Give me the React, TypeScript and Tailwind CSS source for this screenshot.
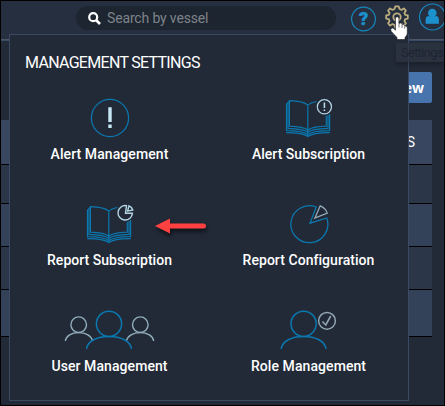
import type { ReactNode } from "react";

const BLUE = "#0b78b0";
const PALE = "#b4d6e6";

function Art({ children }: { children: ReactNode }) {
  return (
    <svg width="100" height="42" viewBox="0 0 100 42" fill="none" stroke={BLUE} strokeWidth="1.25" className="block">
      {children}
    </svg>
  );
}

function Book() {
  return (
    <g strokeWidth="1.2">
      <path d="M48.8 7.2C45 3.4 38 3 30.4 2.7V28.2C38 28.4 45 29 48.8 32.2C52.6 29 59 28.4 67.3 28.2V18" />
      <path d="M48.8 7.2C51 5 54 4.2 57.5 3.5M48.8 7.2V38" />
      <path d="M30.4 3.5L29 4.5V30.3C37 30.5 45 31 48.8 34.4C52.6 31 60 30.5 69 30.3V17" />
      <path d="M29 5L27.5 6V32.6C36 32.7 45 33 48.8 36.6C52.6 33 61 32.7 70.6 32.6V16" />
      <path d="M27.2 34.6C36 34.7 45 35.3 48.8 38.5C52.6 35.3 61 34.7 70.8 34.6" />
    </g>
  );
}

function AlertIcon() {
  return (
    <Art>
      <circle cx="50" cy="20" r="18.6" />
      <path d="M50 9.2V24M50 26.5V30" stroke="#c5e7f6" strokeWidth="3.4" />
    </Art>
  );
}

function AlertBookIcon() {
  return (
    <Art>
      <Book />
      <g stroke={PALE}>
        <circle cx="65.4" cy="8.8" r="7.1" />
        <path d="M65.4 4.6V10M65.4 11.4V13" strokeWidth="1.6" />
      </g>
    </Art>
  );
}

function ReportBookIcon() {
  return (
    <Art>
      <Book />
      <g stroke={PALE} strokeWidth="1.4">
        <path d="M66.5 1.7A7.2 7.2 0 1 0 72.4 9.1L65.5 9.3Z" />
        <path d="M67.6 7.1L69 1.8Q72 3 72.8 6Z" />
      </g>
    </Art>
  );
}

function PieIcon() {
  return (
    <Art>
      <path d="M57.2 3A18.5 18.5 0 1 0 67.8 14L51 19.2Z" />
      <path d="M55.8 14.2L61.2 1.8Q66.5 3.8 68.3 9.1Z" stroke="#96abbb" />
    </Art>
  );
}

function UsersIcon() {
  return (
    <Art>
      <g stroke="#91adba" strokeWidth="1.4">
        <circle cx="18.7" cy="14.7" r="7.8" />
        <path d="M5.3 31C6.2 26 11.4 22.6 18.7 22.6C26 22.6 31.4 26 32.5 30.7" />
        <circle cx="80.3" cy="14.7" r="7.8" />
        <path d="M66.5 30.7C67.6 26 73 22.6 80.3 22.6C87.6 22.6 92.8 26 93.7 31" />
      </g>
      <g strokeWidth="1.5">
        <circle cx="49" cy="13.8" r="12.6" />
        <path d="M26.5 39C27.5 31 37 26.5 49 26.5S70.5 31 71.5 39" />
      </g>
    </Art>
  );
}

function RoleIcon() {
  return (
    <Art>
      <g strokeWidth="1.5">
        <circle cx="44.6" cy="13.8" r="12.6" />
        <path d="M22.2 39C23.2 31 32.6 26.5 44.6 26.5S66 31 67 39" />
      </g>
      <g stroke="#91a5b3" strokeWidth="1.5">
        <circle cx="68" cy="10.8" r="8.4" />
        <path d="M63.4 11.5L66.8 15L71.7 6" strokeWidth="1.6" />
      </g>
    </Art>
  );
}

const items: { label: string; icon: ReactNode; text: string }[] = [
  { label: "Alert Management", icon: <AlertIcon />, text: "tracking-[0.08px]" },
  { label: "Alert Subscription", icon: <AlertBookIcon />, text: "tracking-[0.02px]" },
  { label: "Report Subscription", icon: <ReportBookIcon />, text: "tracking-[0.02px]" },
  { label: "Report Configuration", icon: <PieIcon />, text: "tracking-[0.05px]" },
  { label: "User Management", icon: <UsersIcon />, text: "tracking-[0.08px]" },
  { label: "Role Management", icon: <RoleIcon />, text: "tracking-[0.08px]" },
];

function Header() {
  return (
    <header className="flex h-[38px] shrink-0 bg-[#262f40] pl-[75px]">
      <div className="mt-[5px] flex h-6 w-[260px] shrink-0 items-center rounded-full bg-[#1d2530] pl-3">
        <svg width="13" height="13" viewBox="0 0 13 13" fill="none" stroke="#fff" strokeWidth="2.2">
          <circle cx="5.2" cy="5.2" r="4" />
          <path d="M8 8L12 12" strokeWidth="2.7" />
        </svg>
        <span className="ml-[6px] text-[14px] leading-5 tracking-[-0.15px] text-[#7d8389]">Search by vessel</span>
      </div>
      <svg width="26" height="26" viewBox="0 0 26 26" className="ml-[14.5px] mt-[4.5px] shrink-0">
        <circle cx="12.5" cy="13" r="11.9" fill="none" stroke="#1788bd" strokeWidth="1.2" />
        <text x="12.5" y="19" textAnchor="middle" fontSize="18" fontWeight="900" fill="#1b91ce" stroke="#1b91ce" strokeWidth="0.5">?</text>
      </svg>
      <svg width="24" height="24" viewBox="0 0 24 24" className="ml-[8.5px] mt-[3.5px] shrink-0" fill="none" stroke="#bcad7e" strokeWidth="1.8" strokeLinejoin="round">
        <path d="M10.3 1.4H13.7L14.5 4L16.5 4.9L18.9 3.4L20.9 5.5L19.4 7.9L20.2 9.9L22.8 10.4V13.6L20.2 14.1L19.4 16.1L20.9 18.5L18.9 20.6L16.5 19.1L14.5 20L13.7 22.6H10.3L9.5 20L7.5 19.1L5.1 20.6L3.1 18.5L4.6 16.1L3.8 14.1L1.2 13.6V10.4L3.8 9.9L4.6 7.9L3.1 5.5L5.1 3.4L7.5 4.9L9.5 4Z" />
        <circle cx="12" cy="12" r="3.7" />
      </svg>
      <svg width="28" height="28" viewBox="0 0 28 28" className="ml-[9px] mt-[2px] shrink-0">
        <circle cx="14.5" cy="14" r="13" fill="none" stroke="#1788bd" strokeWidth="1.2" />
        <circle cx="14.3" cy="10" r="4.3" fill="#1b91ce" />
        <path d="M7.6 20.8V17Q7.6 13 10.9 12.9Q14.3 15.3 17.7 12.9Q20.9 13 20.9 17V20.8Z" fill="#1b91ce" />
      </svg>
    </header>
  );
}

export default function App() {
  return (
    <div className="relative flex h-[406px] w-[445px] flex-col overflow-hidden border border-black bg-[#222a37] font-['Roboto','Liberation_Sans',sans-serif] text-white">
      <Header />
      <div className="h-0.5 shrink-0 border-t border-[#4d5666] bg-[#394b67]" />
      <div className="mt-[31px] flex w-[431px] justify-end">
        <div className="flex h-[31px] w-[72px] items-center justify-end rounded-[2px] bg-[#4774ad] pr-[8px] font-['Open_Sans'] text-[14px] font-bold">New</div>
      </div>
      <div className="mt-[17px] w-[431px]">
        <div className="flex h-[45px] items-center justify-end border-b border-black bg-[#38475f] pr-[17px] text-[14px]">ACTIONS</div>
        <div className="h-[39px] border-b border-black bg-[#2b3749]" />
        <div className="h-[43px] border-b border-black bg-[#344259]" />
        <div className="h-[43px] border-b border-black bg-[#2b3749]" />
        <div className="h-[47px] border-b border-black bg-[#344259]" />
      </div>

      <section className="absolute left-[8px] top-[33px] h-[367px] w-[400px] border border-[#3b4a64] bg-[#222a37]">
        <h1 className="ml-[15px] mt-[17px] h-[22px] whitespace-nowrap text-[16px] leading-[22px] tracking-[-0.7px]">MANAGEMENT SETTINGS</h1>
        <div className="mt-[24px] grid grid-cols-[200px_198px]">
          {items.map(({ label, icon, text }) => (
            <div key={label} className="flex h-[106px] flex-col items-center">
              {icon}
              <span className={`mr-px mt-[4px] whitespace-nowrap text-[14px] font-medium leading-5 ${text}`}>{label}</span>
            </div>
          ))}
        </div>
      </section>

      <svg width="56" height="24" viewBox="0 0 56 24" className="absolute left-[152px] top-[215px] drop-shadow-[1px_3px_2px_rgba(0,0,0,0.6)]">
        <path d="M17 2.5V17.5L2 10Z" fill="#ff4040" />
        <path d="M16 10H50.5" stroke="#ff4040" strokeWidth="5" strokeLinecap="round" />
      </svg>

      <div className="absolute right-0 top-[42px] flex h-[19px] w-[48px] items-center bg-[#2d3542]/80 pl-[5px] text-[13px] tracking-[-0.7px] text-[#1e2531] shadow-[0_3px_3px_rgba(0,0,0,0.2)]">Settings</div>

      <svg width="18" height="24" viewBox="0 0 18 24" className="absolute left-[389px] top-[15px]" fill="white" stroke="#17191f" strokeWidth="0.6">
        <path d="M5.5 2.5Q5.5.7 7.1.7T8.9 2.5V7.6Q11.5 6 12 8.6Q14.3 7.6 14.7 10Q17.3 9.4 17.3 12V17Q17.3 19.5 15 21.5V23.5H7V21.5L1.1 15.3Q0 13 1.9 12Q3.2 11.6 4.3 13.1L5.5 14.3Z" />
        <path d="M9 8V11.5M12 9V12M14.6 10.3V12.5" />
      </svg>
    </div>
  );
}
